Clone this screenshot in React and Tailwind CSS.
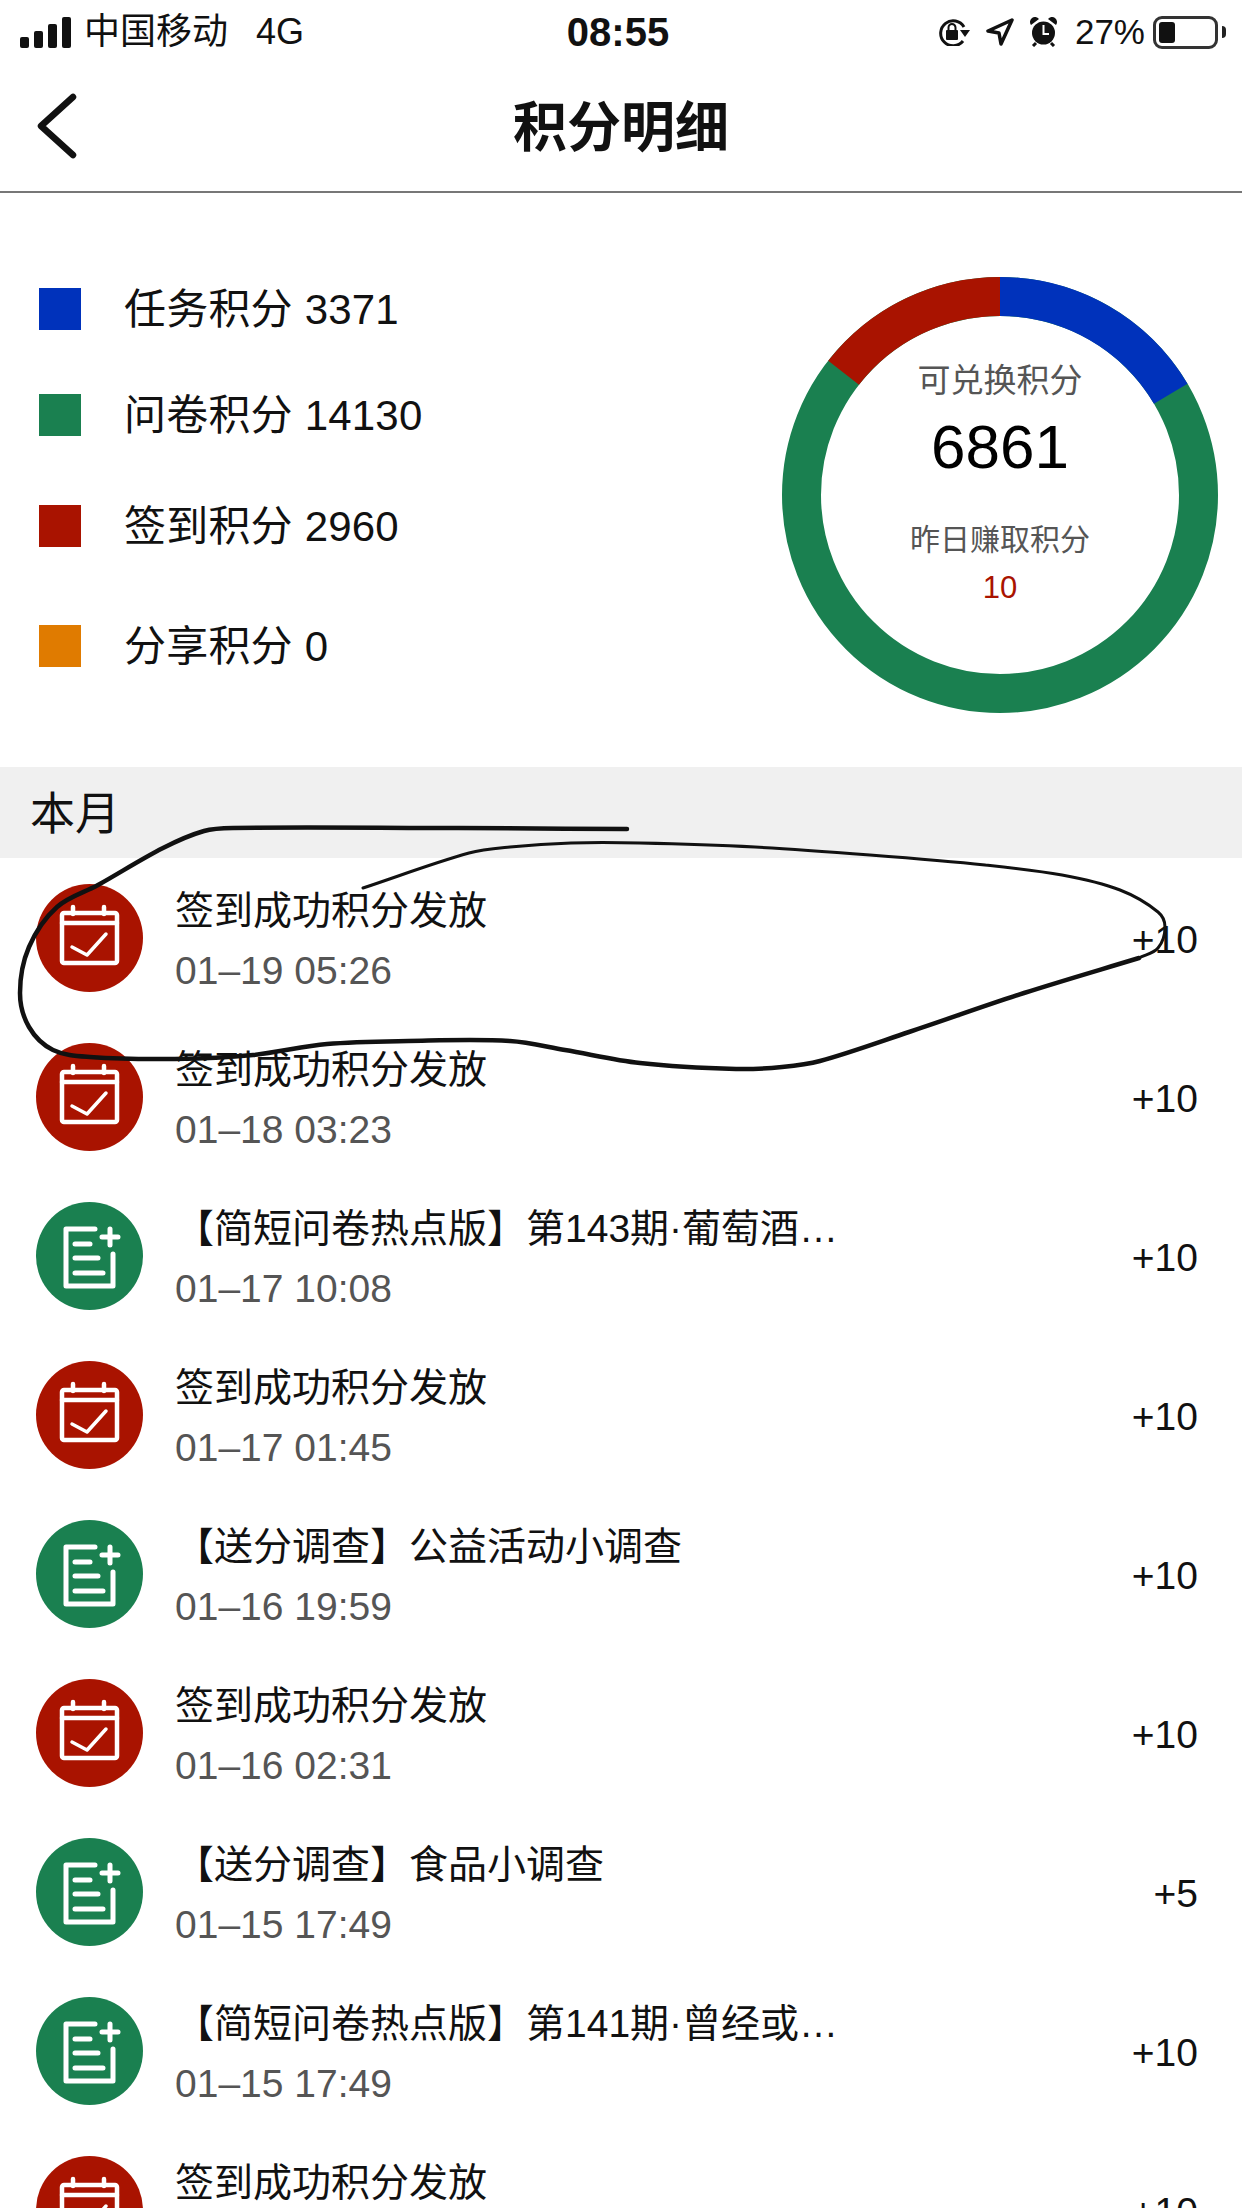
import React from "react";

const RED = "#a91300";
const GREEN = "#1a8050";

const legend = [
  { label: "任务积分 3371", color: "bg-[#0032bb]", margin: "mt-[95px]" },
  { label: "问卷积分 14130", color: "bg-[#1a8050]", margin: "mt-[64px]" },
  { label: "签到积分 2960", color: "bg-[#a91300]", margin: "mt-[69px]" },
  { label: "分享积分 0", color: "bg-[#e07b00]", margin: "mt-[78px]" },
];

const rows = [
  { type: "sign", title: "签到成功积分发放", date: "01–19 05:26", score: "+10" },
  { type: "sign", title: "签到成功积分发放", date: "01–18 03:23", score: "+10" },
  { type: "survey", title: "【简短问卷热点版】第143期·葡萄酒…", date: "01–17 10:08", score: "+10" },
  { type: "sign", title: "签到成功积分发放", date: "01–17 01:45", score: "+10" },
  { type: "survey", title: "【送分调查】公益活动小调查", date: "01–16 19:59", score: "+10" },
  { type: "sign", title: "签到成功积分发放", date: "01–16 02:31", score: "+10" },
  { type: "survey", title: "【送分调查】食品小调查", date: "01–15 17:49", score: "+5" },
  { type: "survey", title: "【简短问卷热点版】第141期·曾经或…", date: "01–15 17:49", score: "+10" },
  { type: "sign", title: "签到成功积分发放", date: "", score: "+10" },
];

function SignIcon() {
  return (
    <svg width="107" height="108" viewBox="0 0 107 108" fill="none" stroke="#fff" strokeWidth="4.5" strokeLinecap="round" strokeLinejoin="round">
      <ellipse cx="53.5" cy="54" rx="53.5" ry="54" fill={RED} stroke="none" />
      <rect x="26" y="29" width="55" height="50" rx="2" />
      <path d="M26 39H81M37 23V30M68 23V30" />
      <path d="M36 63L51 71L70 50" strokeWidth="3.5" />
    </svg>
  );
}

function SurveyIcon() {
  return (
    <svg width="107" height="108" viewBox="0 0 107 108" fill="none" stroke="#fff" strokeWidth="5" strokeLinecap="round" strokeLinejoin="round">
      <ellipse cx="53.5" cy="54" rx="53.5" ry="54" fill={GREEN} stroke="none" />
      <path d="M59 27H30V84H77V52M39 42H54M39 56H62M39 71H67M74 27V43M66 35H82" />
    </svg>
  );
}

function Donut() {
  return (
    <div className="relative h-[436px] w-[436px]">
      <svg width="436" height="436" viewBox="-218 -218 436 436">
        <circle r="198.5" fill="none" stroke="#1a8050" strokeWidth="39" />
        <path d="M0 -198.5A198.5 198.5 0 0 1 170.7 -101.3" fill="none" stroke="#0032bb" strokeWidth="39" />
        <path d="M-156.4 -122.2A198.5 198.5 0 0 1 0 -198.5" fill="none" stroke="#a91300" strokeWidth="39" />
      </svg>
      <div className="absolute inset-0 flex flex-col items-center">
        <span className="mt-[82px] text-[33px] leading-[44px] text-[#555]">可兑换积分</span>
        <span className="mt-[9px] text-[62px] leading-[70px] text-black">6861</span>
        <span className="mt-[37px] text-[30px] leading-[42px] text-[#555]">昨日赚取积分</span>
        <span className="mt-[9px] text-[31px] leading-[36px] text-[#a91300]">10</span>
      </div>
    </div>
  );
}

function StatusBar() {
  return (
    <div className="flex h-[64px] items-center justify-between pl-[20px] pr-[16px] text-[36px] text-[#111]">
      <div className="flex items-center">
        <svg width="51" height="31" viewBox="0 0 51 31" fill="#111">
          <rect x="0" y="20" width="9" height="11" rx="2" />
          <rect x="14" y="14" width="9" height="17" rx="2" />
          <rect x="28" y="7" width="9" height="24" rx="2" />
          <rect x="42" y="0" width="9" height="31" rx="2" />
        </svg>
        <span className="ml-[13px]">中国移动</span>
        <span className="ml-[28px]">4G</span>
      </div>
      <span className="ml-[-6px] text-[40px] font-bold">08:55</span>
      <div className="flex items-center">
        <svg width="32" height="28" viewBox="0 0 32 28" fill="none" stroke="#111" strokeWidth="3">
          <path d="M25 23A12.5 12.5 0 1 1 26 9" />
          <path d="M22 12H32L27 19Z" fill="#111" stroke="none" />
          <rect x="8" y="12" width="12" height="10" rx="1" fill="#111" stroke="none" />
          <path d="M10.5 12V9.5A3.5 3.5 0 0 1 17.5 9.5V12" strokeWidth="2" />
        </svg>
        <svg className="ml-[16px]" width="28" height="28" viewBox="0 0 28 28" fill="none" stroke="#111" strokeWidth="3.5" strokeLinejoin="round" strokeLinecap="round">
          <path d="M26 2L2 13L13 15L15 26Z" />
        </svg>
        <svg className="ml-[16px]" width="27" height="30" viewBox="0 0 27 30" fill="#111">
          <circle cx="13.5" cy="16" r="11.5" />
          <path d="M1 8A5 5 0 0 1 9 2ZM26 8A5 5 0 0 0 18 2Z" />
          <path d="M13.5 8V17H19" stroke="#fff" strokeWidth="2" fill="none" />
          <path d="M6 26L3 29M21 26L24 29" stroke="#111" strokeWidth="3" />
        </svg>
        <span className="ml-[18px] text-[35px]">27%</span>
        <div className="ml-[8px] flex h-[33px] w-[65px] items-center rounded-[9px] border-[3px] border-[#333] p-[3px]">
          <div className="h-full w-[16px] rounded-[3px] bg-[#111]" />
        </div>
        <div className="ml-[4px] h-[12px] w-[4px] rounded-r-full bg-[#222]" />
      </div>
    </div>
  );
}

// pen strokes drawn over the screenshot, points are page coordinates
function smooth(points) {
  const tangent = (a, b) => {
    const len = Math.hypot(b[0] - a[0], b[1] - a[1]) || 1;
    return [(b[0] - a[0]) / len, (b[1] - a[1]) / len];
  };
  let d = `M${points[0][0]} ${points[0][1]}`;
  for (let i = 0; i < points.length - 1; i++) {
    const p1 = points[i];
    const p2 = points[i + 1];
    const t1 = tangent(points[i - 1] || p1, p2);
    const t2 = tangent(p1, points[i + 2] || p2);
    const h = Math.hypot(p2[0] - p1[0], p2[1] - p1[1]) / 3;
    d += `C${p1[0] + t1[0] * h} ${p1[1] + t1[1] * h} ${p2[0] - t2[0] * h} ${p2[1] - t2[1] * h} ${p2[0]} ${p2[1]}`;
  }
  return d;
}

const thickStroke = [
  [627, 829], [430, 828], [233, 828], [204, 831], [163, 848], [98, 885], [57, 907], [29, 947], [20, 993], [29, 1027], [53, 1050],
  [90, 1057], [175, 1059], [253, 1055], [327, 1044], [408, 1041], [510, 1041], [565, 1050], [640, 1063], [736, 1069],
  [782, 1067], [820, 1061], [909, 1032], [1024, 993], [1139, 958],
];

const thinStroke = [
  [1139, 958], [1158, 948], [1165, 927], [1158, 912], [1120, 890], [1062, 875], [985, 865], [870, 855], [755, 847], [640, 843],
  [571, 843], [510, 847], [469, 853], [363, 888],
];

export default function App() {
  return (
    <div className="relative h-[2208px] w-[1242px] overflow-hidden bg-white font-['Liberation_Sans','Noto_Sans_CJK_SC',sans-serif]">
      <StatusBar />

      <div className="relative flex h-[129px] items-center justify-center border-b-2 border-[#777]">
        <svg className="absolute left-[36px] top-[29px]" width="42" height="66" viewBox="0 0 42 66" fill="none" stroke="#111" strokeWidth="6.5" strokeLinecap="round" strokeLinejoin="round">
          <path d="M37 4L5 33L37 62" />
        </svg>
        <h1 className="text-[54px] font-bold leading-none text-[#111]">积分明细</h1>
      </div>

      <div className="flex h-[574px] justify-between pl-[39px] pr-[24px]">
        <div className="flex flex-col">
          {legend.map((item) => (
            <div key={item.label} className={`flex h-[42px] items-center gap-[43px] ${item.margin}`}>
              <div className={`h-[42px] w-[42px] ${item.color}`} />
              <span className="text-[42px] tracking-[0.2px] text-[#111]">{item.label}</span>
            </div>
          ))}
        </div>
        <div className="mt-[84px]">
          <Donut />
        </div>
      </div>

      <div className="flex h-[91px] items-center bg-[#f0f0f0] pl-[30px] pt-[4px] text-[45px] text-[#111]">本月</div>

      <div className="flex flex-col">
        {rows.map((row, index) => (
          <div key={index} className="flex h-[159px] shrink-0 items-center pl-[36px] pr-[44px]">
            {row.type === "sign" ? <SignIcon /> : <SurveyIcon />}
            <div className="ml-[32px] flex flex-1 flex-col pt-[6px]">
              <span className="text-[39px] leading-[46px] text-[#111]">{row.title}</span>
              <span className="mt-[15px] h-[44px] text-[39px] leading-[44px] text-[#555]">{row.date}</span>
            </div>
            <span className="pt-[5px] text-[39px] text-[#111]">{row.score}</span>
          </div>
        ))}
      </div>

      <svg className="pointer-events-none absolute left-0 top-0" width="1242" height="2208" fill="none" stroke="#111" strokeLinecap="round">
        <path d={smooth(thickStroke)} strokeWidth="4.5" />
        <path d={smooth(thinStroke)} strokeWidth="3" />
      </svg>
    </div>
  );
}
